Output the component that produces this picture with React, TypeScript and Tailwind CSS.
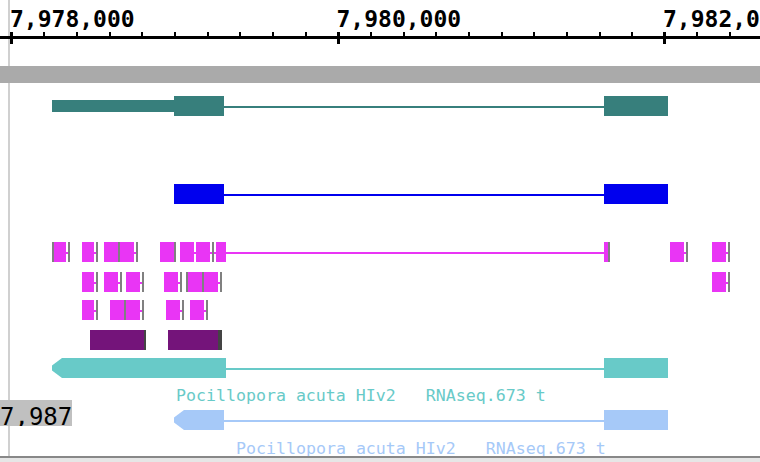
import React from "react";

// horizontal positions are genome coordinates already mapped to pixels
const PX_PER_TICK = 32.65;
const FIRST_TICK = 11.8;

type Rect = [number, number, string]; // x1, x2, kind

const MAG = "#e935f5";
const TICK = "#808080";
const ARROW = "[clip-path:polygon(10px_0,100%_0,100%_100%,10px_100%,0_62%,0_38%)]";

// kind: m = exon box, l = connector, g = end tick
const readRows: { gap: string; rects: Rect[] }[] = [
  {
    gap: "mt-[38px]",
    rects: [
      [52, 54, "g"], [54, 66, "m"], [66, 68, "l"], [68, 70, "g"],
      [82, 94, "m"], [94, 96, "l"], [96, 98, "g"],
      [104, 118, "m"], [118, 120, "g"], [120, 134, "m"], [134, 136, "l"], [136, 138, "g"],
      [160, 174, "m"], [174, 176, "g"],
      [180, 194, "m"], [194, 196, "l"], [196, 210, "m"], [210, 212, "l"], [212, 214, "g"],
      [214, 216, "l"], [216, 226, "m"], [226, 604, "l"], [604, 608, "m"], [608, 610, "g"],
      [670, 684, "m"], [684, 686, "l"], [686, 688, "g"],
      [712, 726, "m"], [726, 728, "l"], [728, 730, "g"],
    ],
  },
  {
    gap: "mt-[10px]",
    rects: [
      [82, 94, "m"], [94, 96, "l"], [96, 98, "g"],
      [104, 118, "m"], [118, 120, "l"], [120, 122, "g"],
      [126, 140, "m"], [140, 142, "l"], [142, 144, "g"],
      [164, 178, "m"], [178, 180, "l"], [180, 182, "g"],
      [186, 188, "g"], [188, 202, "m"], [202, 204, "g"], [204, 218, "m"], [218, 220, "l"], [220, 222, "g"],
      [712, 726, "m"], [726, 728, "l"], [728, 730, "g"],
    ],
  },
  {
    gap: "mt-[8px]",
    rects: [
      [82, 94, "m"], [94, 96, "l"], [96, 98, "g"],
      [110, 124, "m"], [124, 126, "g"], [126, 140, "m"], [140, 142, "l"], [142, 144, "g"],
      [166, 180, "m"], [180, 182, "l"], [182, 184, "g"],
      [190, 204, "m"], [204, 206, "l"], [206, 208, "g"],
    ],
  },
];

function Seg({ x1, x2, color, kind = "full", className = "" }: { x1: number; x2: number; color: string; kind?: "full" | "line" | "utr"; className?: string }) {
  const v = kind === "line" ? "top-[10px] h-[2px]" : kind === "utr" ? "top-[4px] h-[12px]" : "top-0 h-[20px]";
  return <div className={`absolute ${v} ${className}`} style={{ left: x1, width: x2 - x1, background: color }} />;
}

function Row({ className = "", children }: { className?: string; children: React.ReactNode }) {
  return <div className={`relative h-[20px] shrink-0 ${className}`}>{children}</div>;
}

function Ruler() {
  const ticks = Array.from({ length: 23 }, (_, i) => FIRST_TICK + i * PX_PER_TICK);
  const labels = ["7,978,000", "7,980,000", "7,982,000"];
  return (
    <div className="relative h-[66px] shrink-0">
      {labels.map((t, i) => (
        <div
          key={t}
          className="absolute top-[8px] text-[23px] font-bold leading-none text-black whitespace-nowrap"
          style={{ left: 10 + i * 326.5 }}
        >
          {t}
        </div>
      ))}
      <div className="absolute left-0 right-0 top-[36px] h-[3px] bg-black" />
      {ticks.map((x, i) =>
        i % 10 === 0 ? (
          <div key={i} className="absolute top-[32px] h-[12px] w-[3px] bg-black" style={{ left: x - 1.5 }} />
        ) : (
          <div key={i} className="absolute top-[32px] h-[4px] w-[2px] bg-black" style={{ left: x - 1 }} />
        )
      )}
    </div>
  );
}

function Label({ className, children }: { className: string; children: React.ReactNode }) {
  return (
    <div className={`h-[17px] shrink-0 overflow-hidden text-[16.6px] leading-none whitespace-pre ${className}`}>
      {children}
    </div>
  );
}

export default function App() {
  return (
    <div className="relative w-[760px] h-[462px] overflow-hidden bg-white flex flex-col font-['DejaVu_Sans_Mono','Liberation_Mono',monospace]">
      <div className="absolute left-[8px] top-0 h-[456px] w-[2px] bg-[#d0d0d0]" />
      <Ruler />
      <div className="relative h-[17px] shrink-0 bg-[#aaaaaa]" />

      <div className="relative h-[373px] shrink-0 overflow-hidden flex flex-col">
        {/* gene model */}
        <Row className="mt-[13px]">
          <Seg x1={52} x2={174} color="#377f7c" kind="utr" />
          <Seg x1={174} x2={224} color="#377f7c" />
          <Seg x1={224} x2={604} color="#377f7c" kind="line" />
          <Seg x1={604} x2={668} color="#377f7c" />
        </Row>

        {/* CDS */}
        <Row className="mt-[68px]">
          <Seg x1={174} x2={224} color="#0000ee" />
          <Seg x1={224} x2={604} color="#0000ee" kind="line" />
          <Seg x1={604} x2={668} color="#0000ee" />
        </Row>

        {/* reads */}
        {readRows.map((row, r) => (
          <Row key={r} className={row.gap}>
            {row.rects.map(([a, b, k], i) => (
              <Seg key={i} x1={a} x2={b} color={k === "g" ? TICK : MAG} kind={k === "l" ? "line" : "full"} />
            ))}
          </Row>
        ))}
        <Row className="mt-[10px]">
          <Seg x1={90} x2={144} color="#74147a" />
          <Seg x1={144} x2={146} color="#444444" />
          <Seg x1={168} x2={218} color="#74147a" />
          <Seg x1={218} x2={222} color="#444444" />
        </Row>

        {/* transcripts */}
        <Row className="mt-[8px]">
          <Seg x1={52} x2={226} color="#68cac8" className={ARROW} />
          <Seg x1={226} x2={604} color="#68cac8" kind="line" />
          <Seg x1={604} x2={668} color="#68cac8" />
        </Row>
        <Label className="mt-[10px] ml-[176px] text-[#68cac8]">Pocillopora acuta HIv2   RNAseq.673 t</Label>

        <Row className="mt-[5px]">
          <Seg x1={174} x2={224} color="#a6c9f8" className={ARROW} />
          <Seg x1={224} x2={604} color="#a6c9f8" kind="line" />
          <Seg x1={604} x2={668} color="#a6c9f8" />
        </Row>
        <Label className="mt-[11px] ml-[236px] text-[#a6c9f8]">Pocillopora acuta HIv2   RNAseq.673 t</Label>

        {/* floating position readout over the tracks */}
        <div className="absolute left-0 top-[317px] h-[26px] w-[72px] overflow-hidden bg-[#c0c0c0] text-[24px] leading-[34px] text-black whitespace-nowrap">
          7,987
        </div>
      </div>

      <div className="h-[2px] shrink-0 bg-[#888888]" />
      <div className="h-[4px] shrink-0 bg-[#e6e6e6]" />
    </div>
  );
}
